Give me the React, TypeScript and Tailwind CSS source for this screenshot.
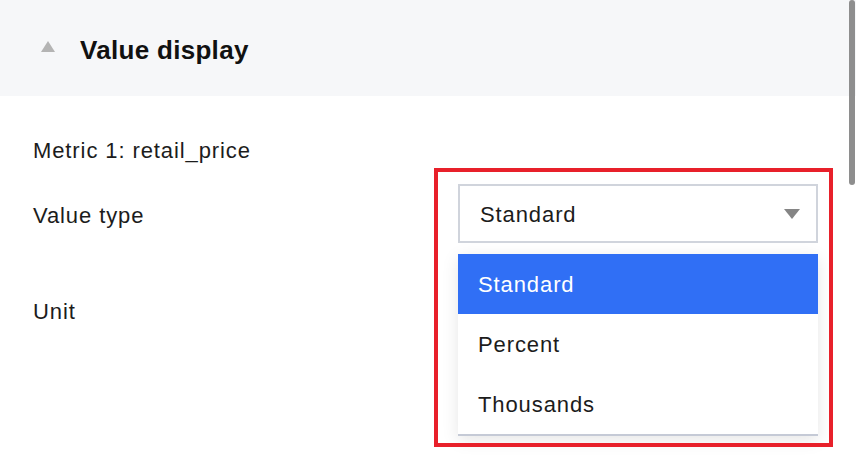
const font = { fontFamily: '"Liberation Sans", Arial, sans-serif' };

const options = ["Standard", "Percent", "Thousands"];

export default function App() {
  return (
    <div
      className="relative w-[856px] h-[460px] overflow-hidden bg-white text-[#1c1c1c]"
      style={font}
    >
      {/* Section header */}
      <div className="h-[96px] bg-[#f6f7f9] flex items-center pl-[41px]">
        <svg width="14" height="11" viewBox="0 0 14 11" className="mt-[-4px]">
          <path d="M7 0 L14 11 L0 11 Z" fill="#b4b4b4" />
        </svg>
        <h2 className="ml-[25px] mt-[3px] text-[26px] font-bold leading-none text-[#111] tracking-[0.3px]">
          Value display
        </h2>
      </div>

      {/* Body */}
      <div className="pt-[40px] pl-[33px] pr-[38px] text-[22px] tracking-[0.9px]">
        <div className="h-[30px] leading-[30px]">Metric 1: retail_price</div>

        <div className="mt-[18px] flex items-center justify-between">
          <span className="pt-[3px]">Value type</span>
          <div className="relative w-[360px]">
            <div className="h-[59px] border-2 border-[#d0d4dc] bg-white flex items-center justify-between pl-[20px] pr-[16px]">
              <span className="pt-[1px]">Standard</span>
              <svg width="16" height="10" viewBox="0 0 16 10">
                <path d="M0 0 L16 0 L8 10 Z" fill="#858585" />
              </svg>
            </div>

            {/* Dropdown menu */}
            <div className="absolute left-0 right-0 top-[70px] bg-white border-b-2 border-[#c5cad6] shadow-[0_4px_16px_rgba(0,0,0,0.10)] z-10">
              {options.map((o, i) => (
                <div
                  key={o}
                  className={
                    i === 0
                      ? "h-[60px] flex items-center pl-[20px] bg-[#306ff5] text-white"
                      : "h-[60px] flex items-center pl-[20px] text-[#1c1c1c]"
                  }
                >
                  {o}
                </div>
              ))}
            </div>
          </div>
        </div>

        <div className="mt-[39px] h-[59px] flex items-center">
          <span>Unit</span>
        </div>
      </div>

      {/* Annotation box */}
      <div className="absolute left-[434px] top-[168px] w-[399px] h-[279px] border-4 border-[#e8202a] z-20 pointer-events-none" />

      {/* Overlay scrollbar */}
      <div className="absolute right-[1px] top-0 w-[6px] h-[185px] rounded-full bg-[#8e8e8e]" />
    </div>
  );
}
